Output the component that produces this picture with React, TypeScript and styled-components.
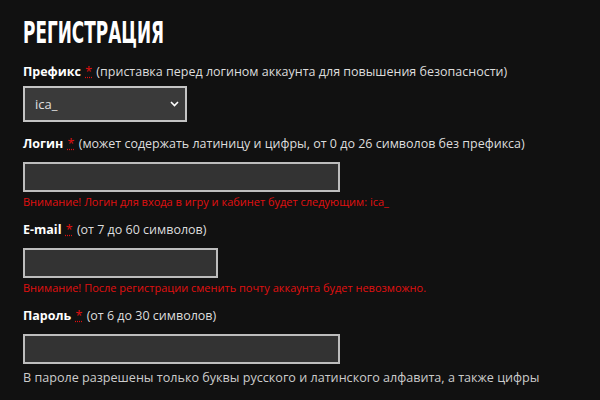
import { createGlobalStyle, styled } from "styled-components";

const GlobalStyle = createGlobalStyle`
  html, body {
    margin: 0;
    padding: 0;
    background: #111111;
  }
  body {
    font-family: "Open Sans", "DejaVu Sans", sans-serif;
    color: #dddddd;
  }
`;

const Page = styled.div`
  width: 600px;
  height: 400px;
  overflow: hidden;
  padding: 14px 23px 0;
  box-sizing: border-box;
`;

const Title = styled.h1`
  margin: 0 0 13px;
  font-family: "DejaVu Sans", sans-serif;
  font-weight: 700;
  font-size: 31px;
  line-height: 36px;
  color: #ffffff;
`;

// the original face is a tall condensed display font; squeeze the fallback
const TitleText = styled.span`
  display: inline-block;
  transform: scaleX(0.545);
  transform-origin: left center;
  white-space: nowrap;
`;

const Field = styled.div<{ $space?: number }>`
  display: flex;
  flex-direction: column;
  align-items: flex-start;
  margin-bottom: ${(p) => p.$space ?? 12}px;
`;

const Label = styled.label<{ $gap?: number }>`
  font-size: 12.5px;
  line-height: 18px;
  color: #dddddd;
  margin-bottom: ${(p) => p.$gap ?? 9}px;
`;

const Name = styled.b`
  color: #ffffff;
  font-weight: 700;
`;

const Required = styled.abbr`
  color: #e01010;
  text-decoration: underline dotted;
  cursor: help;
  margin: 0 1px 0 1px;
`;

const Box = styled.input<{ $w: number }>`
  width: ${(p) => p.$w}px;
  height: 30px;
  box-sizing: border-box;
  background: #333333;
  border: 2px solid #bdbdbd;
  color: #dddddd;
  padding: 0 8px;
  font-family: inherit;
  font-size: 13px;
  outline: none;
`;

const SelectWrap = styled.div`
  position: relative;
  width: 164px;
`;

const Select = styled.select`
  appearance: none;
  width: 164px;
  height: 36px;
  box-sizing: border-box;
  background: #3a3a3a;
  border: 2px solid #c4c4c4;
  color: #e0e0e0;
  padding: 0 10px;
  font-family: inherit;
  font-size: 13px;
  outline: none;
`;

const Chevron = styled.svg`
  position: absolute;
  right: 8px;
  top: 15px;
  pointer-events: none;
`;

const Warning = styled.div`
  font-size: 11px;
  line-height: 15px;
  color: #e01010;
  margin-top: 2px;
`;

const Hint = styled.div`
  font-size: 12.6px;
  line-height: 18px;
  color: #cccccc;
  margin-top: 5px;
`;

export default function App() {
  return (
    <>
      <GlobalStyle />
      <Page>
        <Title>
          <TitleText>РЕГИСТРАЦИЯ</TitleText>
        </Title>

        <Field $space={13}>
          <Label $gap={5}>
            <Name>Префикс</Name> <Required title="обязательно">*</Required>{" "}
            (приставка перед логином аккаунта для повышения безопасности)
          </Label>
          <SelectWrap>
            <Select defaultValue="ica_">
              <option value="ica_">ica_</option>
            </Select>
            <Chevron width="9" height="6" viewBox="0 0 9 6">
              <path d="M1 1l3.5 3.5L8 1" fill="none" stroke="#ffffff" strokeWidth="1.6" />
            </Chevron>
          </SelectWrap>
        </Field>

        <Field>
          <Label>
            <Name>Логин</Name> <Required title="обязательно">*</Required>{" "}
            (может содержать латиницу и цифры, от 0 до 26 символов без префикса)
          </Label>
          <Box $w={317} type="text" />
          <Warning>Внимание! Логин для входа в игру и кабинет будет следующим: ica_</Warning>
        </Field>

        <Field>
          <Label>
            <Name>E-mail</Name> <Required title="обязательно">*</Required>{" "}
            (от 7 до 60 символов)
          </Label>
          <Box $w={195} type="text" />
          <Warning>Внимание! После регистрации сменить почту аккаунта будет невозможно.</Warning>
        </Field>

        <Field>
          <Label>
            <Name>Пароль</Name> <Required title="обязательно">*</Required>{" "}
            (от 6 до 30 символов)
          </Label>
          <Box $w={317} type="password" />
          <Hint>В пароле разрешены только буквы русского и латинского алфавита, а также цифры</Hint>
        </Field>
      </Page>
    </>
  );
}
